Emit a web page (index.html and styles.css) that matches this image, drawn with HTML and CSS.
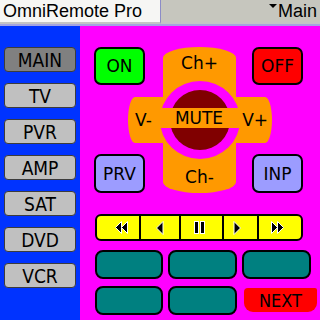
FILE: index.html
```html
<!DOCTYPE html>
<html lang="en">
<head>
    <meta charset="UTF-8">
    <meta name="viewport" content="width=device-width, initial-scale=1.0">
    <title>OmniRemote Pro</title>
    <link rel="stylesheet" href="styles.css">
</head>
<body>

<div class="screen">
    <div class="titlebar">
        <div class="title">OmniRemote Pro</div>
        <div class="menu"><span class="caret"></span>Main</div>
    </div>

    <div class="main">
        <div class="sidebar">
            <div class="side-btn active">MAIN</div>
            <div class="side-btn">TV</div>
            <div class="side-btn">PVR</div>
            <div class="side-btn">AMP</div>
            <div class="side-btn">SAT</div>
            <div class="side-btn">DVD</div>
            <div class="side-btn">VCR</div>
        </div>

        <div class="panel">
            <div class="top">
                <div class="dpad">
                    <div class="vbar"><span>Ch+</span><span>Ch-</span></div>
                    <div class="hbar"><span>V-</span><span>V+</span></div>
                    <div class="ring"></div>
                    <div class="core"></div>
                    <div class="mute">MUTE</div>
                </div>
                <div class="key on">ON</div>
                <div class="key off">OFF</div>
                <div class="key prv">PRV</div>
                <div class="key inp">INP</div>
            </div>

            <div class="transport">
                <div class="seg seg-rew">
                    <svg width="13" height="13" viewBox="0 0 13 13"><polygon points="6.5,0.5 0.5,6.5 6.5,12.5"/><polygon points="12.5,0.5 6.5,6.5 12.5,12.5"/></svg>
                </div>
                <div class="seg">
                    <svg width="8" height="14" viewBox="0 0 8 14"><polygon points="7,0.5 0.5,7 7,13.5"/></svg>
                </div>
                <div class="seg seg-pause">
                    <svg width="13" height="13" viewBox="0 0 13 13"><rect x="1.5" y="0.5" width="4" height="12"/><rect x="7.5" y="0.5" width="4" height="12"/></svg>
                </div>
                <div class="seg seg-play">
                    <svg width="8" height="14" viewBox="0 0 8 14"><polygon points="1,0.5 7.5,7 1,13.5"/></svg>
                </div>
                <div class="seg seg-ff">
                    <svg width="13" height="13" viewBox="0 0 13 13"><polygon points="0.5,0.5 6.5,6.5 0.5,12.5"/><polygon points="6.5,0.5 12.5,6.5 6.5,12.5"/></svg>
                </div>
            </div>

            <div class="keys">
                <div class="teal"></div>
                <div class="teal"></div>
                <div class="teal"></div>
                <div class="teal"></div>
                <div class="teal"></div>
                <div class="next">NEXT</div>
            </div>
        </div>
    </div>
</div>

</body>
</html>
```

FILE: styles.css
```css
body {
    margin: 0;
    padding: 0;
    font-family: 'DejaVu Sans', sans-serif;
}

.screen {
    width: 320px;
    height: 320px;
    overflow: hidden;
    display: flex;
    flex-direction: column;
}

/* title bar */
.titlebar {
    display: flex;
    height: 24px;
    border-bottom: 2px solid #a4a4e0;
}

.title {
    width: 157px;
    height: 22px;
    padding-left: 3px;
    background-color: #f6f6f4;
    border-bottom: 2px solid #c4c4c4;
    border-right: 1px solid #8c8cc8;
    font-family: 'Liberation Sans', sans-serif;
    font-size: 18px;
    line-height: 22px;
    color: #000;
}

.menu {
    flex: 1;
    height: 22px;
    padding-right: 3px;
    background-color: #c6c6be;
    border-bottom: 2px solid #c4c4c4;
    font-family: 'Liberation Sans', sans-serif;
    font-size: 18px;
    line-height: 22px;
    text-align: right;
    color: #000;
}

.caret {
    display: inline-block;
    width: 0;
    height: 0;
    border-left: 4px solid transparent;
    border-right: 4px solid transparent;
    border-top: 4px solid #000;
    margin-right: 1px;
    vertical-align: 9px;
}

.main {
    flex: 1;
    display: flex;
}

/* device list */
.sidebar {
    width: 72px;
    padding: 21px 4px 0 4px;
    background-color: #0033ff;
    display: flex;
    flex-direction: column;
    gap: 11px;
}

.side-btn {
    height: 23px;
    border: 1px solid #3c3c3c;
    border-radius: 4px;
    background-color: #c0c0c0;
    display: flex;
    align-items: center;
    justify-content: center;
    font-family: 'DejaVu Sans Condensed', 'DejaVu Sans', sans-serif;
    font-size: 19px;
    color: #000;
}

.side-btn.active {
    background-color: #808080;
}

/* remote panel */
.panel {
    flex: 1;
    background-color: #ff00ff;
    padding: 21px 0 0 14px;
}

.top {
    display: grid;
    grid-template-columns: 51px 107px 51px;
    grid-template-rows: 38px 69px 39px;
    width: 209px;
}

.key {
    box-sizing: border-box;
    border: 2px solid #000;
    border-radius: 7px;
    display: flex;
    align-items: center;
    justify-content: center;
    font-size: 17px;
    color: #000;
    position: relative;
}

.on { grid-column: 1; grid-row: 1; background-color: #00ff00; }
.off { grid-column: 3; grid-row: 1; background-color: #ff0000; }
.prv { grid-column: 1; grid-row: 3; background-color: #9c9cff; }
.inp { grid-column: 3; grid-row: 3; background-color: #9c9cff; }

.dpad {
    grid-column: 1 / -1;
    grid-row: 1 / -1;
    position: relative;
    font-size: 17px;
    color: #000;
}

.vbar {
    position: absolute;
    left: 69px;
    top: 0;
    width: 73px;
    height: 146px;
    box-sizing: border-box;
    padding: 6px 0;
    background-color: #ff9900;
    border-radius: 50% / 11px;
    display: flex;
    flex-direction: column;
    justify-content: space-between;
    align-items: center;
    line-height: 20px;
}

.hbar {
    position: absolute;
    left: 34px;
    top: 50px;
    width: 144px;
    height: 46px;
    box-sizing: border-box;
    padding: 0 4px 0 7px;
    background-color: #ff9900;
    border-radius: 7px / 50%;
    display: flex;
    justify-content: space-between;
    align-items: center;
}

.ring {
    position: absolute;
    left: 66px;
    top: 34px;
    width: 80px;
    height: 78px;
    border-radius: 50%;
    background-color: #ff00ff;
}

.core {
    position: absolute;
    left: 76px;
    top: 43px;
    width: 60px;
    height: 60px;
    border-radius: 50%;
    background-color: #800000;
}

.mute {
    position: absolute;
    left: 64px;
    top: 61px;
    width: 82px;
    height: 20px;
    background-color: #ff9900;
    display: flex;
    align-items: center;
    justify-content: center;
}

/* transport strip */
.transport {
    margin: 21px 0 0 1px;
    width: 208px;
    height: 27px;
    box-sizing: border-box;
    border: 2px solid #000;
    border-radius: 6px;
    background-color: #ffff00;
    display: flex;
}

.seg {
    flex: none;
    box-sizing: border-box;
    display: flex;
    align-items: center;
    justify-content: center;
    border-left: 2px solid #000;
}

.seg svg polygon,
.seg svg rect {
    fill: #000;
    stroke: #fff;
    stroke-width: 1;
}

.seg-rew { width: 42px; border-left: none; padding-left: 6px; }
.seg:nth-child(2) { width: 40px; }
.seg-pause { width: 43px; padding-right: 4px; }
.seg-play { width: 35px; padding-right: 8px; }
.seg-ff { width: 44px; padding-right: 6px; }

/* soft keys */
.keys {
    margin: 9px 0 0 1px;
    display: grid;
    grid-template-columns: 68px 69px 69px;
    grid-template-rows: 29px 29px;
    column-gap: 5px;
    row-gap: 7px;
}

.teal {
    box-sizing: border-box;
    border: 2px solid #000;
    border-radius: 8px;
    background-color: #008080;
}

.next {
    width: 73px;
    height: 24px;
    margin: 2px 0 0 2px;
    background-color: #ff0000;
    border-radius: 4px 2px 9px 9px;
    display: flex;
    align-items: center;
    justify-content: center;
    font-family: 'DejaVu Sans Condensed', 'DejaVu Sans', sans-serif;
    font-size: 18px;
    color: #000;
}
```
